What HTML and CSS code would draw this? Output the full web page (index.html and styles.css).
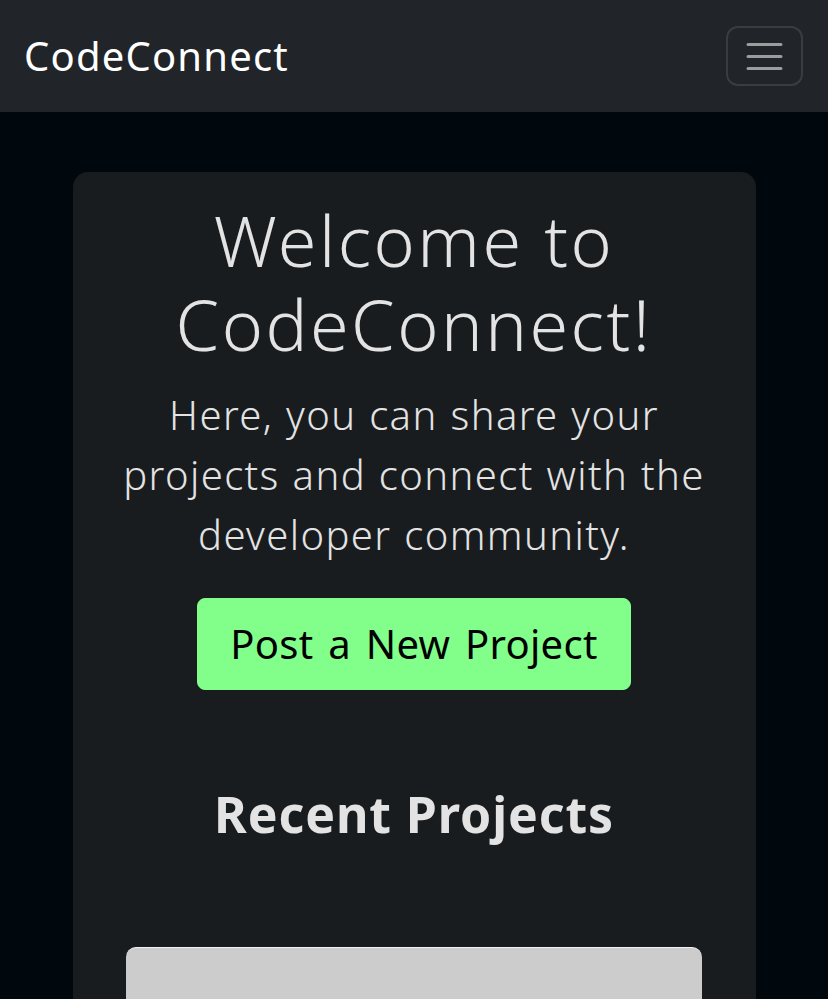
FILE: index.html
```html
<!DOCTYPE html>
<html lang="en">
<head>
<meta charset="utf-8">
<title>CodeConnect</title>
<link rel="stylesheet" href="styles.css">
</head>
<body>
<nav class="navbar">
  <a class="brand" href="#">CodeConnect</a>
  <button class="toggler" aria-label="Toggle navigation">
    <svg class="toggler-icon" viewBox="0 0 30 30" width="45" height="45">
      <path d="M4 7h22M4 15h22M4 23h22" stroke="rgba(255,255,255,0.55)" stroke-width="2" stroke-linecap="round" fill="none"/>
    </svg>
  </button>
</nav>
<main class="main">
  <section class="hero">
    <h1 class="title">Welcome to CodeConnect!</h1>
    <p class="lead">Here, you can share your projects and connect with the developer community.</p>
    <a class="btn-post" href="#">Post a New Project</a>
    <h2 class="section-title">Recent Projects</h2>
    <div class="project-card"></div>
  </section>
</main>
</body>
</html>
```
FILE: styles.css
```css
* { box-sizing: border-box; }
html, body { margin: 0; padding: 0; }
body {
  background: #01080d;
  font-family: "Noto Sans", sans-serif;
  color: #e3e3e3;
  min-height: 999px;
}
.navbar {
  height: 112px;
  background: #212529;
  display: flex;
  align-items: center;
  justify-content: space-between;
  padding: 0 25px 0 24px;
}
.brand {
  color: #fff;
  text-decoration: none;
  font-size: 40px;
  font-weight: 400;
  letter-spacing: 1.2px;
  line-height: 60px;
}
.toggler {
  width: 77px;
  height: 60px;
  background: transparent;
  border: 2px solid #393d41;
  border-radius: 12px;
  display: flex;
  align-items: center;
  justify-content: center;
  padding: 0;
}
.toggler-icon { display: block; }
.main {
  padding-top: 60px;
}
.hero {
  width: 683px;
  margin: 0 auto;
  background: #181c1f;
  border-radius: 15px 15px 0 0;
  padding: 27px 48px 0;
  text-align: center;
  min-height: 827px;
}
.title {
  margin: 0;
  font-size: 70px;
  font-weight: 300;
  line-height: 83.5px;
  letter-spacing: 2.5px;
  color: #e3e3e3;
}
.lead {
  margin: 19px -8px 0;
  font-size: 40px;
  font-weight: 300;
  line-height: 60px;
  letter-spacing: 1.4px;
  word-spacing: 1px;
  color: #e3e3e3;
}
.btn-post {
  display: inline-block;
  margin-top: 33px;
  padding: 15px 32px;
  border: 1px solid #82ff8a;
  border-radius: 8px;
  background: #82ff8a;
  color: #000;
  text-decoration: none;
  font-size: 40px;
  font-weight: 400;
  line-height: 60px;
  letter-spacing: 0.3px;
  word-spacing: 4px;
}
.section-title {
  margin: 94px 0 0;
  font-size: 50px;
  font-weight: 700;
  line-height: 60px;
  letter-spacing: 0.9px;
  color: #e3e3e3;
}
.project-card {
  width: 576px;
  height: 60px;
  margin: 103px auto 0;
  background: #cccccc;
  border-top: 1px solid #f0f0f0;
  border-radius: 10px 10px 0 0;
}
```
